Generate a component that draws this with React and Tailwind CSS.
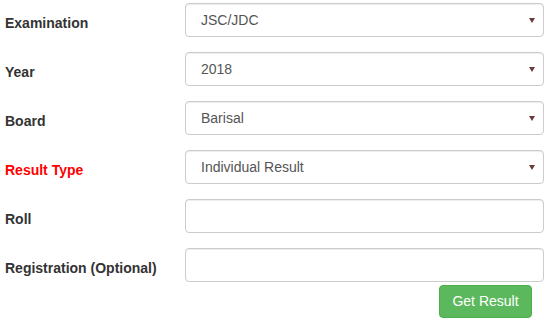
const ROWS = [
  { label: 'Examination', value: 'JSC/JDC', select: true },
  { label: 'Year', value: '2018', select: true },
  { label: 'Board', value: 'Barisal', select: true },
  { label: 'Result Type', value: 'Individual Result', select: true, red: true },
  { label: 'Roll', value: '', select: false },
  { label: 'Registration (Optional)', value: '', select: false },
]

function Caret() {
  return (
    <svg width="6" height="5" viewBox="0 0 6 5" className="shrink-0">
      <path d="M0 0H6L3 5Z" fill="#6b3b3f" />
    </svg>
  )
}

export default function App() {
  return (
    <div
      className="w-[556px] h-[324px] bg-white pt-[3px] text-[14px] overflow-hidden"
      style={{ fontFamily: '"Liberation Sans", Arial, sans-serif' }}
    >
      <div className="flex flex-col gap-[15px]">
        {ROWS.map((row) => (
          <div key={row.label} className="flex items-start">
            <label
              className={
                row.red
                  ? 'w-[185px] pl-[5px] pt-[10px] leading-5 font-bold text-[#ff0000]'
                  : 'w-[185px] pl-[5px] pt-[10px] leading-5 font-bold text-[#333333]'
              }
            >
              {row.label}
            </label>
            <div className="w-[359px] h-[34px] flex items-center justify-between rounded-[4px] border border-[#cccccc] bg-white pl-[15px] pr-[8px] text-[#555555] shadow-[inset_0_1px_1px_rgba(0,0,0,0.075)]">
              <span>{row.value}</span>
              {row.select ? <Caret /> : null}
            </div>
          </div>
        ))}
      </div>
      <div className="flex justify-end pr-[24px] pt-[3px]">
        <button
          type="button"
          className="w-[93px] h-[33px] rounded-[4px] border border-[#4cae4c] bg-[#5cb85c] text-white text-[14px]"
        >
          Get Result
        </button>
      </div>
    </div>
  )
}
